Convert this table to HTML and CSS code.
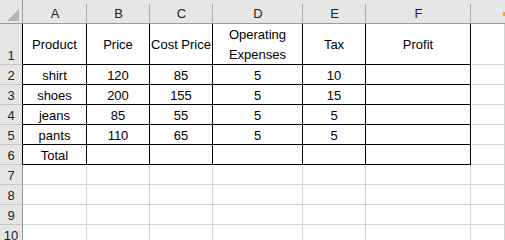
FILE: index.html
```html
<!DOCTYPE html>
<html>
<head>
<meta charset="utf-8">
<link rel="stylesheet" href="styles.css">
</head>
<body>
<div class="sheet">
  <div class="corner"><svg class="tri" width="12" height="12" viewBox="0 0 12 12"><polygon points="0,12 12,12 12,0" fill="#b5b5b5"/></svg></div>
  <div class="ch">A</div><div class="ch">B</div><div class="ch">C</div><div class="ch">D</div><div class="ch">E</div><div class="ch">F</div><div class="ch last"><span class="flag"></span></div>

  <div class="rh rt">1</div>
  <div class="c t">Product</div><div class="c t">Price</div><div class="c t">Cost Price</div><div class="c t wrap">Operating<br>Expenses</div><div class="c t">Tax</div><div class="c t">Profit</div><div class="c"></div>

  <div class="rh rt">2</div>
  <div class="c t">shirt</div><div class="c t">120</div><div class="c t">85</div><div class="c t">5</div><div class="c t">10</div><div class="c t"></div><div class="c"></div>

  <div class="rh rt">3</div>
  <div class="c t">shoes</div><div class="c t">200</div><div class="c t">155</div><div class="c t">5</div><div class="c t">15</div><div class="c t"></div><div class="c"></div>

  <div class="rh rt">4</div>
  <div class="c t">jeans</div><div class="c t">85</div><div class="c t">55</div><div class="c t">5</div><div class="c t">5</div><div class="c t"></div><div class="c"></div>

  <div class="rh rt">5</div>
  <div class="c t">pants</div><div class="c t">110</div><div class="c t">65</div><div class="c t">5</div><div class="c t">5</div><div class="c t"></div><div class="c"></div>

  <div class="rh rt">6</div>
  <div class="c t">Total</div><div class="c t"></div><div class="c t"></div><div class="c t"></div><div class="c t"></div><div class="c t"></div><div class="c"></div>

  <div class="rh">7</div>
  <div class="c"></div><div class="c"></div><div class="c"></div><div class="c"></div><div class="c"></div><div class="c"></div><div class="c"></div>

  <div class="rh">8</div>
  <div class="c"></div><div class="c"></div><div class="c"></div><div class="c"></div><div class="c"></div><div class="c"></div><div class="c"></div>

  <div class="rh">9</div>
  <div class="c"></div><div class="c"></div><div class="c"></div><div class="c"></div><div class="c"></div><div class="c"></div><div class="c"></div>

  <div class="rh">10</div>
  <div class="c"></div><div class="c"></div><div class="c"></div><div class="c"></div><div class="c"></div><div class="c"></div><div class="c"></div>
</div>
</body>
</html>
```
FILE: styles.css
```css
html, body {
  margin: 0;
  padding: 0;
  background: #ffffff;
  overflow: hidden;
}
.sheet {
  display: grid;
  grid-template-columns: 23px 64px 63px 63px 90px 63px 105px 1fr;
  grid-template-rows: 24px 41px repeat(9, 20px);
  width: 505px;
  font-family: "Liberation Sans", Arial, sans-serif;
  font-size: 13px;
  color: #000;
}
.sheet > div {
  box-sizing: border-box;
  border-right: 1px solid #d4d4d4;
  border-bottom: 1px solid #d4d4d4;
}
.corner {
  background: #e6e6e6;
  border-right: 1px solid #9b9b9b !important;
  border-bottom: 1px solid #9b9b9b !important;
  display: flex;
  align-items: flex-end;
  justify-content: flex-end;
  padding: 0 3px 2px 0;
}
.tri { display: block; }
.ch {
  background: #e6e6e6;
  border-bottom: 1px solid #9b9b9b !important;
  border-right: none !important;
  display: flex;
  align-items: flex-end;
  justify-content: center;
  padding-bottom: 2px;
  color: #222;
  position: relative;
  background-image: linear-gradient(#ababab, #ababab);
  background-size: 1px 19px;
  background-position: right bottom;
  background-repeat: no-repeat;
}
.ch.last { background-image: none; }
.flag {
  position: absolute;
  right: 0;
  top: 12px;
  width: 2px;
  height: 4px;
  background: #f2a23a;
}
.rh {
  background: #e6e6e6;
  border-right: 1px solid #9b9b9b !important;
  border-bottom: 1px solid #c6c6c6 !important;
  display: flex;
  align-items: flex-end;
  justify-content: center;
  padding-bottom: 1px;
  color: #222;
}
.rh.rt { border-right-color: #000 !important; }
.c {
  display: flex;
  align-items: center;
  justify-content: center;
  white-space: nowrap;
  padding-top: 1px;
}
.c.t {
  border-right: 1px solid #000;
  border-bottom: 1px solid #000;
}
.wrap {
  text-align: center;
  line-height: 20px;
  white-space: normal;
}
```
